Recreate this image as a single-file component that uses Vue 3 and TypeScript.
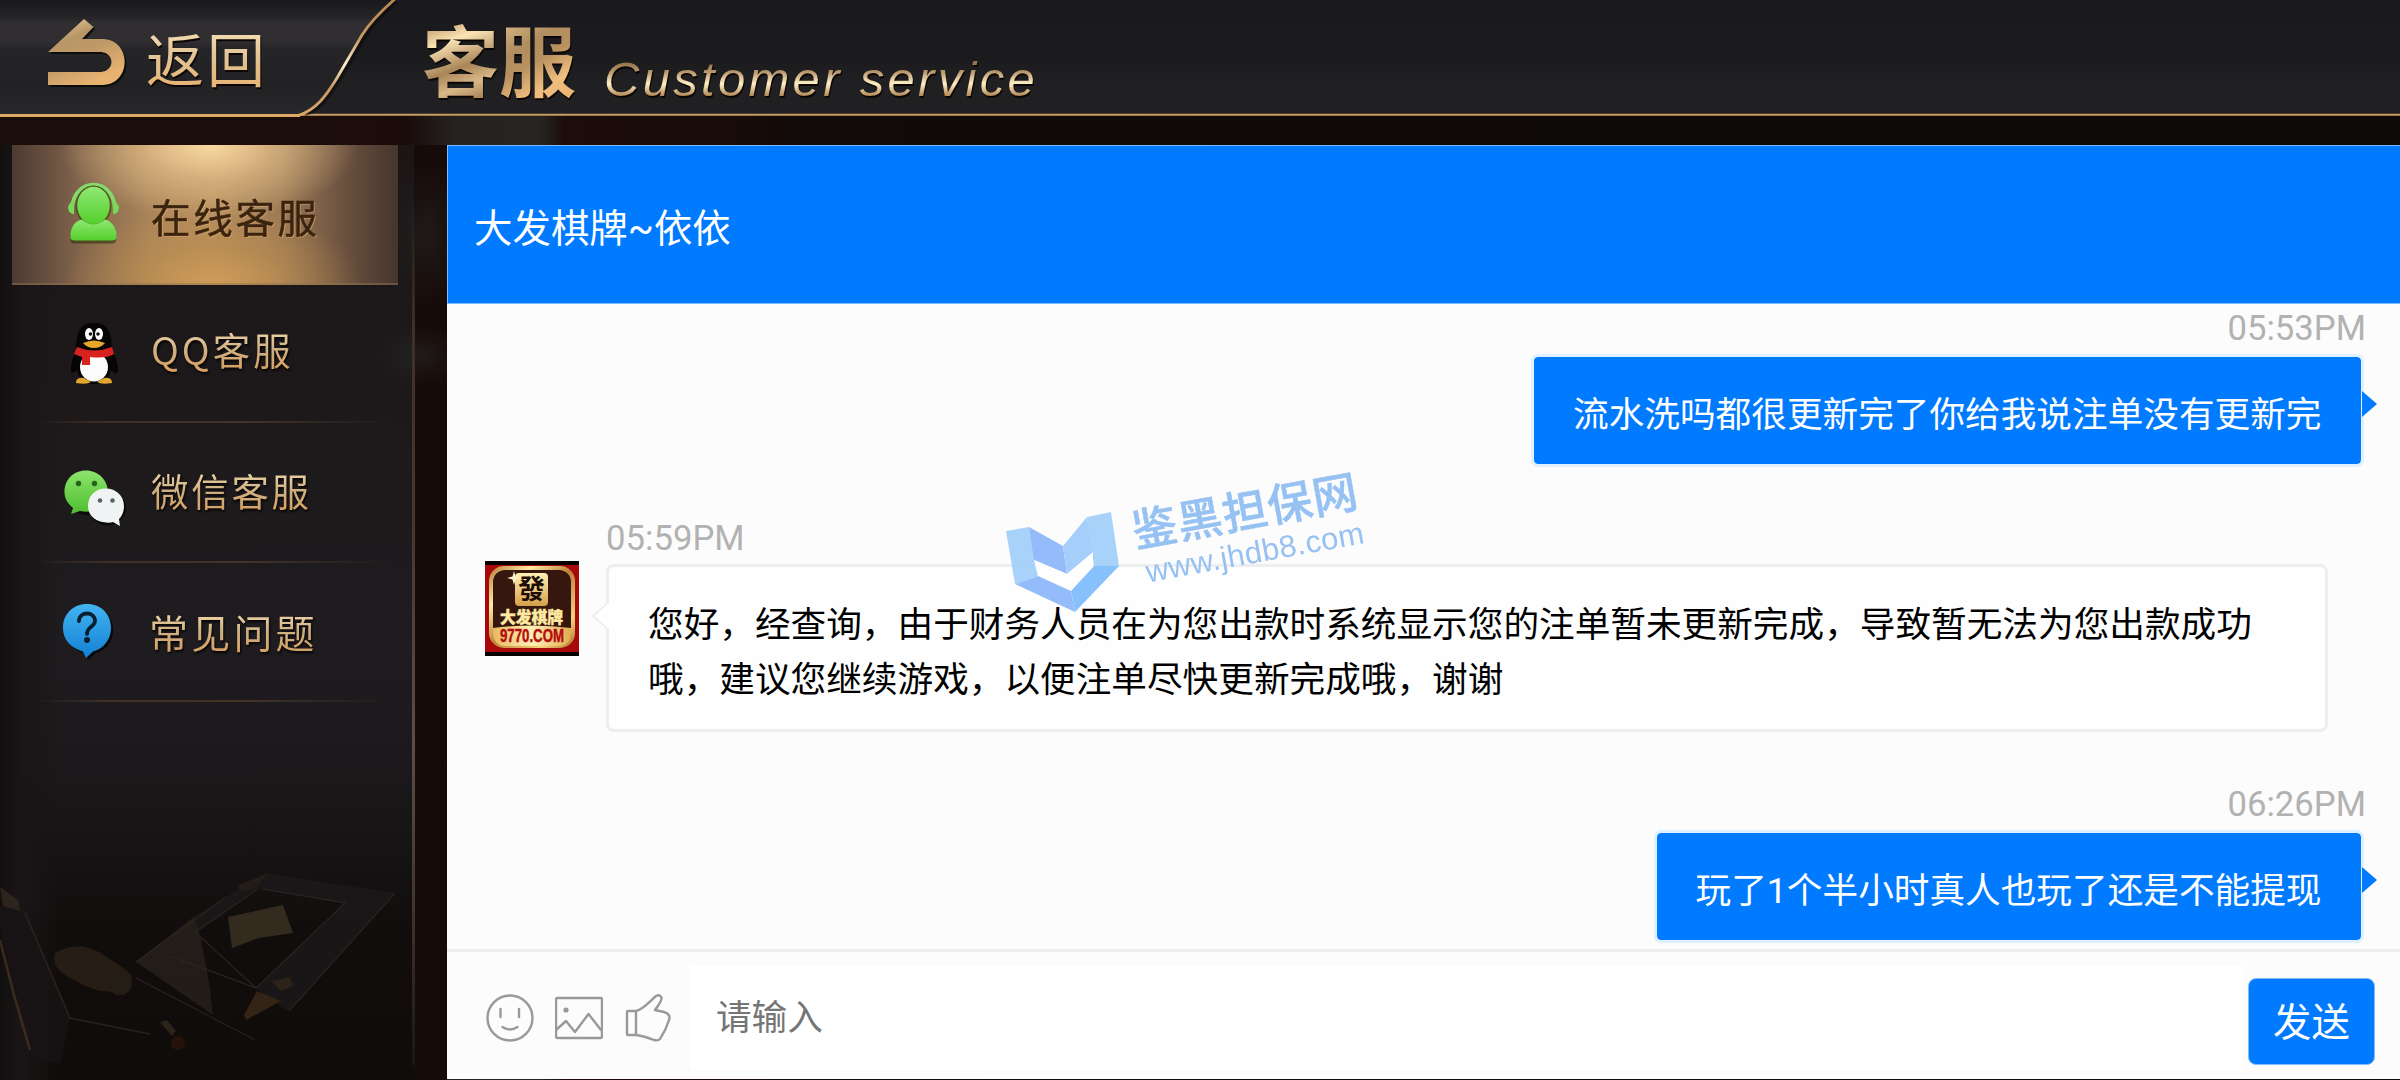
<script setup lang="ts">
import { ref } from 'vue'

interface NavItem { id: string; label: string }
interface Message { id: number; side: 'left' | 'right'; time: string; text: string }

const active = ref('online')
const draft = ref('')

const nav: NavItem[] = [
  { id: 'online', label: '在线客服' },
  { id: 'qq', label: 'QQ客服' },
  { id: 'wechat', label: '微信客服' },
  { id: 'faq', label: '常见问题' },
]

const messages: Message[] = [
  { id: 1, side: 'right', time: '05:53PM', text: '流水洗吗都很更新完了你给我说注单没有更新完' },
  { id: 2, side: 'left', time: '05:59PM', text: '您好，经查询，由于财务人员在为您出款时系统显示您的注单暂未更新完成，导致暂无法为您出款成功哦，建议您继续游戏，以便注单尽快更新完成哦，谢谢' },
  { id: 3, side: 'right', time: '06:26PM', text: '玩了1个半小时真人也玩了还是不能提现' },
]
</script>

<template>
  <div class="app">
    <header class="top">
      <svg class="top-shape" width="2400" height="120" viewBox="0 0 2400 120" aria-hidden="true">
        <defs>
          <linearGradient id="tabBg" x1="0" y1="0" x2="0" y2="1">
            <stop offset="0" stop-color="#19191c" />
            <stop offset=".14" stop-color="#242326" />
            <stop offset=".2" stop-color="#302e31" />
            <stop offset=".36" stop-color="#302e31" />
            <stop offset=".42" stop-color="#252427" />
            <stop offset=".75" stop-color="#222224" />
            <stop offset="1" stop-color="#29292b" />
          </linearGradient>
          <linearGradient id="edge" x1="0" y1="0" x2="0" y2="1">
            <stop offset="0" stop-color="#b98652" />
            <stop offset=".35" stop-color="#c79a66" />
            <stop offset=".56" stop-color="#fff0cf" />
            <stop offset=".75" stop-color="#c89a62" />
            <stop offset="1" stop-color="#dca767" />
          </linearGradient>
          <linearGradient id="gold" x1="0" y1="0" x2=".5" y2="1">
            <stop offset="0" stop-color="#f0d5a4" />
            <stop offset=".35" stop-color="#b89667" />
            <stop offset=".6" stop-color="#c09a66" />
            <stop offset="1" stop-color="#e8b271" />
          </linearGradient>
        </defs>
        <path d="M0 114.8H2400" stroke="#c99a64" stroke-width="1.9" />
        <path d="M0 0H394C380 12 371 21 362 35L337 78C326 96 316 110 298 115.5H0Z" fill="url(#tabBg)" />
        <path d="M397 1C383 13 374 22 365 36L340 79C329 97 319 111 305 114" fill="none" stroke="#09080a" stroke-width="4" opacity=".55" />
        <path d="M395 -1C380 12 371 21 362 35L337 78C326 96 316 110 298 115.5" fill="none" stroke="url(#edge)" stroke-width="2.8" />
        <path d="M0 115.5H300" stroke="#dca767" stroke-width="3" />
        <g>
          <path d="M50 54L86 21L95 29L84 41H104C134 43 134 85 104 87H50V74H102C117 73 117 55 102 54Z" fill="#080606" opacity=".8" />
          <path d="M48 52L84 19L93.5 27L82 39H103C132 40 132 84 103 85H48V72H101C115 71 115 53 101 52Z" fill="url(#gold)" />
        </g>
      </svg>
      <button class="back">返回</button>
      <h1 class="title">
        <span class="title-zh"><span class="g1">客</span><span class="g2">服</span></span>
        <span class="title-en">Customer service</span>
      </h1>
    </header>

    <div class="body">
      <aside class="side">
        <svg class="art" width="447" height="230" viewBox="0 850 447 230" aria-hidden="true">
          <path d="M136 962L195 916Q208 965 213 1015Z" fill="#27211d" />
          <path d="M265 873L394 893L288 1012L256 988L345 903L258 889L198 932L195 916Z" fill="#1b191a" />
          <path d="M262 889L345 903L256 988L170 956M256 988L195 932L258 889M395 893L290 1010M136 978L255 1040M136 962L226 897" fill="none" stroke="#3a3025" stroke-width="1.2" opacity=".8" />
          <path d="M228 917L283 905L293 933L259 938L232 948Z" fill="#3b3323" />
          <path d="M271 981L290 977L293 986L281 991Z" fill="#34291c" />
          <path d="M257 991L281 1001L246 1020L244 1015Z" fill="#3d2a19" />
          <path d="M55 953Q80 938 105 956Q120 965 132 975Q128 995 113 992Q92 992 75 980Q50 970 55 953Z" fill="#2c2117" />
          <circle cx="120" cy="983" r="12" fill="#292118" />
          <path d="M238 885L267 874L256 888L240 892Z" fill="#27211a" />
          <path d="M0 905L26 915L70 1018L60 1064L34 1058L0 930Z" fill="#181415" />
          <path d="M25 913L70 1018L150 1034" fill="none" stroke="#30281f" stroke-width="1.6" />
          <path d="M0 940L14 995L30 1050" fill="none" stroke="#43331f" stroke-width="2.5" />
          <path d="M0 887L18 900L20 911L3 906Z" fill="#332a20" />
          <path d="M160 1022L167 1020L176 1031L172 1036Z" fill="#33291d" />
          <circle cx="178" cy="1043" r="7" fill="#2b140c" />
        </svg>

        <nav class="nav">
          <button
            v-for="item in nav"
            :key="item.id"
            class="nav-item"
            :class="[item.id, { active: item.id === active }]"
            @click="active = item.id"
          >
            <svg v-if="item.id === 'online'" class="ico" width="64" height="68" viewBox="0 0 64 68">
              <defs>
                <linearGradient id="green" x1="0" y1="0" x2="0" y2="1" gradientUnits="objectBoundingBox">
                  <stop offset="0" stop-color="#8ee873" /><stop offset="1" stop-color="#55cf2d" />
                </linearGradient>
              </defs>
              <g transform="translate(0 1.5)" fill="#3b3a14" opacity=".7">
                <path d="M8.500 60C8 48 13 42 20 40Q32 48 44 40C51 42 55 50 54 58Q54 62 50 62H13Q9 62 8.500 60Z" />
              </g>
              <path d="M10 28C12 -3 51 -3 53 28" fill="none" stroke="#86d86b" stroke-width="4" />
              <path d="M12 21Q6 23 6 28Q7 34 12 34ZM51 21Q57 23 57 28Q56 34 51 34Z" fill="#79d95b" />
              <ellipse cx="31.500" cy="26" rx="18" ry="20.500" fill="#54521f" />
              <ellipse cx="31.500" cy="25.500" rx="16.300" ry="18.800" fill="url(#green)" />
              <path d="M8.500 58C8 47 13 41 20 39.500Q31 49 43 39.500C50 41 55 49 54.500 57Q54 60.500 50 60.500H13Q9 60.500 8.500 58Z" fill="url(#green)" />
            </svg>
            <svg v-else-if="item.id === 'qq'" class="ico" width="64" height="68" viewBox="0 0 64 68">
              <path d="M14 31C14 9 20 3 32 3S50 9 50 31Q56 39 56 51Q54 56 49 50Q46 64 32 64T15 50Q9 56 9 50Q9 40 14 31Z" fill="#050506" />
              <ellipse cx="32" cy="47" rx="14" ry="14.500" fill="#fbfbfb" />
              <path d="M14 62Q15 57 22 58L29 62Q25 65 14 63ZM50 62Q49 57 42 58L35 62Q39 65 50 63Z" fill="#e2a52e" />
              <path d="M15 27Q32 34 50 27L52 34Q44 39 28 37V45H20V37L12 34Z" fill="#d82222" />
              <ellipse cx="27" cy="14" rx="4" ry="6" fill="#fff" /><ellipse cx="37" cy="14" rx="4" ry="6" fill="#fff" />
              <circle cx="28.500" cy="14" r="1.800" fill="#111" /><circle cx="36" cy="14" r="1.800" fill="#111" />
              <path d="M21 23Q32 18 43 23Q39 28 32 28T21 23Z" fill="#e5a62b" />
            </svg>
            <svg v-else-if="item.id === 'wechat'" class="ico" width="64" height="68" viewBox="0 0 64 68">
              <defs>
                <linearGradient id="wx" x1="0" y1="0" x2="0" y2="1">
                  <stop offset="0" stop-color="#8be46b" /><stop offset="1" stop-color="#4fbd2f" />
                </linearGradient>
              </defs>
              <g fill="#0b0a0b" transform="translate(1.500 2)"><ellipse cx="24" cy="30" rx="22" ry="21" /><ellipse cx="44" cy="44" rx="18.500" ry="17.500" /></g>
              <path d="M24 8.500C11 8.500 2.500 18 2.500 30C2.500 37 6 42 11 46L9 52L18 49Q28 51 35 47Q45 40 46 30C46 18 36 8.500 24 8.500Z" fill="url(#wx)" />
              <path d="M44 26.500C33 26.500 26 34 26 44S34 60 44 60.500Q48 61 51 60L58 64L57 57Q62 52 62 44C62 34 54 26.500 44 26.500Z" fill="#eff3f3" />
              <circle cx="16.500" cy="21.500" r="2.700" fill="#28621c" /><circle cx="32.500" cy="21.500" r="2.700" fill="#28621c" />
              <circle cx="38" cy="38.500" r="2.300" fill="#5b6262" /><circle cx="50.500" cy="38.500" r="2.300" fill="#5b6262" />
            </svg>
            <svg v-else class="ico" width="64" height="68" viewBox="0 0 64 68">
              <defs>
                <linearGradient id="blue" x1="0" y1="0" x2="0" y2="1">
                  <stop offset="0" stop-color="#43b4f2" /><stop offset="1" stop-color="#1380d4" />
                </linearGradient>
              </defs>
              <path d="M25 6C11 6 1 16 1 30C1 42 9 50 21 53.500L24 60L31 53.500C41 51 49 42 49 30C49 16 39 6 25 6Z" fill="#060809" transform="translate(2 2)" />
              <path d="M25 6C11 6 1 16 1 30C1 42 9 50 21 53.500L24 60L31 53.500C41 51 49 42 49 30C49 16 39 6 25 6Z" fill="url(#blue)" />
              <path d="M17 23C17 13 33 13 33 23C33 29 25 28 25 36" fill="none" stroke="#08202f" stroke-width="3.800" stroke-linecap="round" />
              <circle cx="25" cy="42" r="3" fill="#08202f" />
            </svg>
            <span class="label">{{ item.label }}</span>
          </button>
        </nav>
        <div class="rail"></div>
      </aside>

      <main class="chat">
        <div class="chat-head">大发棋牌~依依</div>

        <section class="log">
          <article v-for="m in messages" :key="m.id" class="msg" :class="m.side">
            <svg v-if="m.side === 'left'" class="avatar" width="94" height="95" viewBox="0 0 94 95">
              <defs>
                <linearGradient id="frame" x1="0" y1="0" x2="1" y2="1">
                  <stop offset="0" stop-color="#b57a35" /><stop offset=".25" stop-color="#ffe9a4" />
                  <stop offset=".5" stop-color="#bd8138" /><stop offset=".8" stop-color="#f6d27b" />
                  <stop offset="1" stop-color="#a96d28" />
                </linearGradient>
                <linearGradient id="plate" x1="0" y1="0" x2="1" y2="0">
                  <stop offset="0" stop-color="#e9b85e" /><stop offset=".5" stop-color="#fff0b8" />
                  <stop offset="1" stop-color="#e0ad50" />
                </linearGradient>
                <linearGradient id="tile" x1="0" y1="0" x2="0" y2="1">
                  <stop offset="0" stop-color="#fff1b5" /><stop offset="1" stop-color="#d5a049" />
                </linearGradient>
                <clipPath id="frameClip"><rect x="8" y="9" width="78" height="76" rx="12" /></clipPath>
              </defs>
              <rect width="94" height="95" fill="#050101" />
              <rect y="4" width="94" height="87" fill="#a80a0c" />
              <rect x="4" y="5" width="86" height="82" rx="15" fill="url(#frame)" />
              <rect x="8" y="9" width="78" height="75" rx="12" fill="#35170f" />
              <path d="M8 67Q47 62 86 67V90H8Z" fill="url(#plate)" clip-path="url(#frameClip)" />
              <rect x="30" y="12" width="33" height="33" rx="4" fill="url(#tile)" />
              <path d="M29 10L30.500 15.500L36 17L30.500 18.500L29 24L27.500 18.500L22 17L27.500 15.500Z" fill="#fff2c8" />
              <text x="46.500" y="38" class="av-tile">發</text>
              <text x="46.500" y="61.500" class="av-name" textLength="63" lengthAdjust="spacingAndGlyphs">大发棋牌</text>
              <text x="47" y="81" class="av-site" textLength="64" lengthAdjust="spacingAndGlyphs">9770.COM</text>
            </svg>
            <div class="col">
              <time class="time">{{ m.time }}</time>
              <div class="bubble">
                {{ m.text }}
                <svg v-if="m.side === 'left'" class="tail" width="18" height="28" viewBox="0 0 18 28"><path d="M18 0L2 14L18 28" fill="#fefefe" stroke="#eee" stroke-width="2" /></svg>
                <svg v-else class="tail" width="15" height="26" viewBox="0 0 15 26"><path d="M0 0L15 13L0 26Z" fill="#007aff" /></svg>
              </div>
            </div>
          </article>
        </section>

        <footer class="composer">
          <div class="tools">
            <svg width="48" height="48" viewBox="0 0 48 48"><circle cx="24" cy="24" r="22.500" /><path d="M14.500 15V23M33 15V23M16.500 33Q24 38 31.500 33" /></svg>
            <svg width="48" height="48" viewBox="0 0 48 48"><rect x="1" y="4" width="46" height="40" rx="1.500" /><path d="M1 36L11 27L20 38L33.500 20L46 36" /><circle cx="11" cy="16" r="2.600" class="dot" /></svg>
            <svg width="48" height="48" viewBox="0 0 48 48"><rect x="3" y="17" width="9" height="24" rx="1" /><path d="M12 17C20 15 26 7 32 2Q36 0 37.500 3.500Q38 7 31 16L40 18Q47 20 45 26Q42 36 36 45Q34 47 30 46Q20 42 12 41" /></svg>
          </div>
          <input v-model="draft" class="field" type="text" placeholder="请输入" />
          <button class="send">发送</button>
        </footer>
      </main>
    </div>

    <svg class="mark" width="380" height="160" viewBox="1000 460 380 160" aria-hidden="true">
      <path d="M1006 531L1029 527L1038 576L1015 584Z" fill="#a3cffb" />
      <path d="M1029 527L1063 546L1067 574L1034 560Z" fill="#8db7fa" />
      <path d="M1063 546L1087 517L1094 552L1067 574Z" fill="#a0cbfb" />
      <path d="M1087 517L1111 512L1119 566L1094 566Z" fill="#a3cffb" />
      <path d="M1034 560L1067 574L1093 552V566L1071 591L1038 576Z" fill="#fff" />
      <path d="M1015 584L1038 576L1071 591L1075 612Z" fill="#8eb8fa" />
      <path d="M1071 591L1094 566L1119 566L1075 612Z" fill="#7fbdfb" />
      <g transform="translate(1136 550) rotate(-10.300)">
        <text class="mark-zh" x="0" y="-2.500" textLength="228">鉴黑担保网</text>
        <text class="mark-url" x="6" y="34" textLength="221">www.jhdb8.com</text>
      </g>
    </svg>
  </div>
</template>

<style>
html, body { margin: 0; background: #120b09; }
</style>

<style scoped>
.app {
  position: relative; width: 2400px; height: 1080px; overflow: hidden; display: flex; flex-direction: column;
  font-family: Roboto, "Noto Sans CJK SC", sans-serif;
  background: linear-gradient(90deg, #1a0d0a 0, #1c0d0a 370px, #1a0b0a 405px, #242320 455px, #262522 540px, #1c0c0a 565px, #190c09 730px, #100a08 800px, #0d0a08 2400px);
}
button { border: 0; background: none; padding: 0; margin: 0; font: inherit; text-align: left; }

.top { position: relative; flex: none; height: 116px; display: flex; align-items: flex-start; background: linear-gradient(#1a1a1e 0, #1b1b1e 50%, #202022 70%, #202022); }
.top-shape { position: absolute; left: 0; top: 0; z-index: 1; }
.back, .title { position: relative; z-index: 2; filter: drop-shadow(1px 2px 0 #0b0504); }
.back {
  margin: 24px 0 0 146px; width: 276px; line-height: 66px; font-size: 58px; letter-spacing: 3px; font-weight: 400;
  font-family: "Noto Sans CJK SC", sans-serif;
  color: transparent; background: linear-gradient(#f4dcb3 10%, #e2c496 50%, #e7b577 90%); background-clip: text;
}
.title { margin: 0; display: flex; align-items: flex-start; font-weight: 400; }
.title-zh { display: flex; font-family: "Noto Sans CJK SC", sans-serif; font-weight: 700; font-size: 77px; line-height: 90px; margin-top: 13px; }
.title-zh span { color: transparent; background-clip: text; }
.title-zh .g1 { background-image: linear-gradient(160deg, #c8a474 15%, #fbe4b4 32%, #a98558 58%, #d8b888 75%, #a98558 90%); }
.title-zh .g2 { background-image: linear-gradient(150deg, #d6b585 10%, #b18d60 35%, #b8915f 52%, #f0be80 75%, #e7ae6d); }
.title-en {
  font: italic 49px/60px "Liberation Sans", sans-serif; letter-spacing: 3.300px; margin: 49px 0 0 28px; padding-right: 8px;
  color: transparent; background: linear-gradient(#8e6d49 20%, #b8966b 38%, #fff0c6 58%, #b48855 78%); background-clip: text;
}

.body { flex: 1; min-height: 0; display: flex; padding-top: 29px; box-sizing: border-box; }
.side {
  position: relative; flex: none; width: 447px; display: flex;
  background:
    radial-gradient(ellipse 40px 70px at 425px 90px, #26282688, transparent),
    radial-gradient(ellipse 45px 30px at 420px 210px, #28282688, transparent),
    linear-gradient(90deg, #110f0e 0, #1a1516 20px, transparent 60px, transparent 414px, #00000033 414px),
    linear-gradient(90deg, transparent 414px, #1d0e0b 414px),
    linear-gradient(#1b1516 0, #1d191b 250px, #1e1c1f 500px, #1b191b 620px, #151213 720px, #110d0c 790px, #0f0c0a 935px);
}
.art { position: absolute; left: 0; bottom: 0; opacity: .8; }
.nav { position: relative; width: 401px; padding-left: 12px; box-sizing: border-box; }
.nav-item { position: relative; display: flex; align-items: center; width: 386px; height: 139.500px; box-sizing: border-box; padding-left: 50px; }
.nav-item + .nav-item::after, .nav-item.active::after { content: ""; position: absolute; left: 24px; right: 10px; bottom: 1px; height: 2px; background: linear-gradient(90deg, transparent, #3f3027 20%, #43342a 60%, transparent); }
.nav-item.active::after { left: 0; right: 0; bottom: 0; background: #8f714f; opacity: .5; }
.nav-item.active {
  background:
    radial-gradient(ellipse 150px 75px at 51% 0, #fad9a2, #ecc78f99 45%, transparent),
    radial-gradient(ellipse 150px 80px at 52% 100%, #d09c58, #c0904f88 50%, transparent),
    linear-gradient(90deg, #4b3a32 0, #80634b 17%, #a98459 36%, #b48c5d 52%, #9b7955 70%, #6b513f 86%, #45352d 100%);
}
.ico { flex: none; }
.online .ico { margin: 0 0 1px 0; }
.faq .ico { position: relative; top: -1px; }
.wechat .ico { position: relative; top: 2px; }
.label {
  margin-left: 25px; white-space: nowrap; font-family: "Noto Sans CJK SC", sans-serif; font-weight: 400; font-size: 37.500px; letter-spacing: 2.700px; line-height: 56px;
  color: transparent; background: linear-gradient(#ecd2a6 20%, #cfb083 50%, #d6a265 85%); background-clip: text;
  filter: drop-shadow(1px 2px 1px #050303);
  position: relative;
}
.online .label { font-size: 39.500px; color: #3b240f; -webkit-text-stroke: .5px #3b240f; background: none; filter: drop-shadow(1px 1px 0 #d6a76f99); top: 1px; }
.qq .label { top: -5px; letter-spacing: 3px; }
.wechat .label { top: -4px; }
.faq .label { margin-left: 23px; font-size: 39px; letter-spacing: 3.200px; top: -2px; }
.rail { margin-left: 11px; width: 3px; height: 920px; background: linear-gradient(transparent 60px, #3d3029 180px, #483930 400px, #5c4d46 600px, #41352f 760px, #1a1614); }

.chat { flex: 1; min-width: 0; margin-bottom: 1px; display: flex; flex-direction: column; background: #fcfcfc; }
.chat-head { flex: none; height: 158.500px; box-sizing: border-box; border: 1px solid #7fbcff; border-right: 0; background: #007aff; color: #fff; font-size: 38.450px; line-height: 166px; padding-left: 26px; }
.log { flex: 1; min-height: 0; padding: 2.500px 36px 0 38px; }
.msg { display: flex; align-items: flex-start; }
.msg.left { margin: 49px 0 50px; }
.col { display: flex; flex-direction: column; align-items: flex-start; }
.right { justify-content: flex-end; }
.right .col { align-items: flex-end; }
.time { font-size: 34.700px; line-height: 44px; color: #b2b2b2; margin-bottom: 4px; }
.right .time { margin-right: -2px; }
.avatar { flex: none; margin: 45px 27px 0 0; overflow: visible; }
.bubble { position: relative; box-sizing: border-box; font-size: 35.650px; line-height: 55px; border: 3px solid #eee; border-radius: 8px; }
.left .bubble { width: 1722px; padding: 31px 38px 21px 39px; background: #fefefe; color: #000; }
.right .bubble { background: #007aff; background-clip: padding-box; border-color: #dff0ff; color: #fff; padding: 31px 39.500px 21px 39px; border-radius: 7px; white-space: nowrap; }
.tail { position: absolute; }
.left .tail { left: -18px; top: 35px; }
.right .tail { right: -16px; top: 34px; }

.composer { flex: none; height: 130px; box-sizing: border-box; border-top: 3px solid #eee; display: flex; align-items: flex-start; }
.tools { display: flex; gap: 21px; margin: 42px 0 0 39px; width: 204px; box-sizing: border-box; }
.tools svg { flex: none; fill: none; stroke: #999; stroke-width: 2.400; stroke-linejoin: round; stroke-linecap: round; }
.tools .dot { fill: #999; stroke: none; }
.field { margin-top: 14px; width: 1554px; height: 104px; box-sizing: border-box; border: 0; outline: 0; padding: 0 26px; background: #fff; font: 35.600px Roboto, "Noto Sans CJK SC", sans-serif; color: #000; }
.field::placeholder { color: #757575; opacity: 1; }
.send { margin: 26px 0 0 4px; width: 127px; height: 87px; border: 1px solid #7fbcff; border-radius: 8px; background: #007aff; color: #fff; font-size: 38.400px; text-align: center; padding-bottom: 5px; }

.mark { position: absolute; left: 1000px; top: 460px; opacity: .93; overflow: visible; }
.mark-zh { font: 500 45px "Noto Sans CJK SC", sans-serif; fill: #8fbdf3; stroke: #8fbdf3; stroke-width: .500px; }
.mark-url { font: 31px "Liberation Sans", sans-serif; fill: #8fbdf3; }
.av-tile { font: 700 27px "Noto Sans CJK TC", sans-serif; text-anchor: middle; fill: #1d0d06; }
.av-name { font: 900 16px "Noto Sans CJK SC", sans-serif; text-anchor: middle; fill: #ffe9a0; stroke: #ffe9a0; stroke-width: .400px; }
.av-site { font: 700 19px "Liberation Sans", sans-serif; text-anchor: middle; fill: #b30d10; stroke: #b30d10; stroke-width: .500px; }
</style>
